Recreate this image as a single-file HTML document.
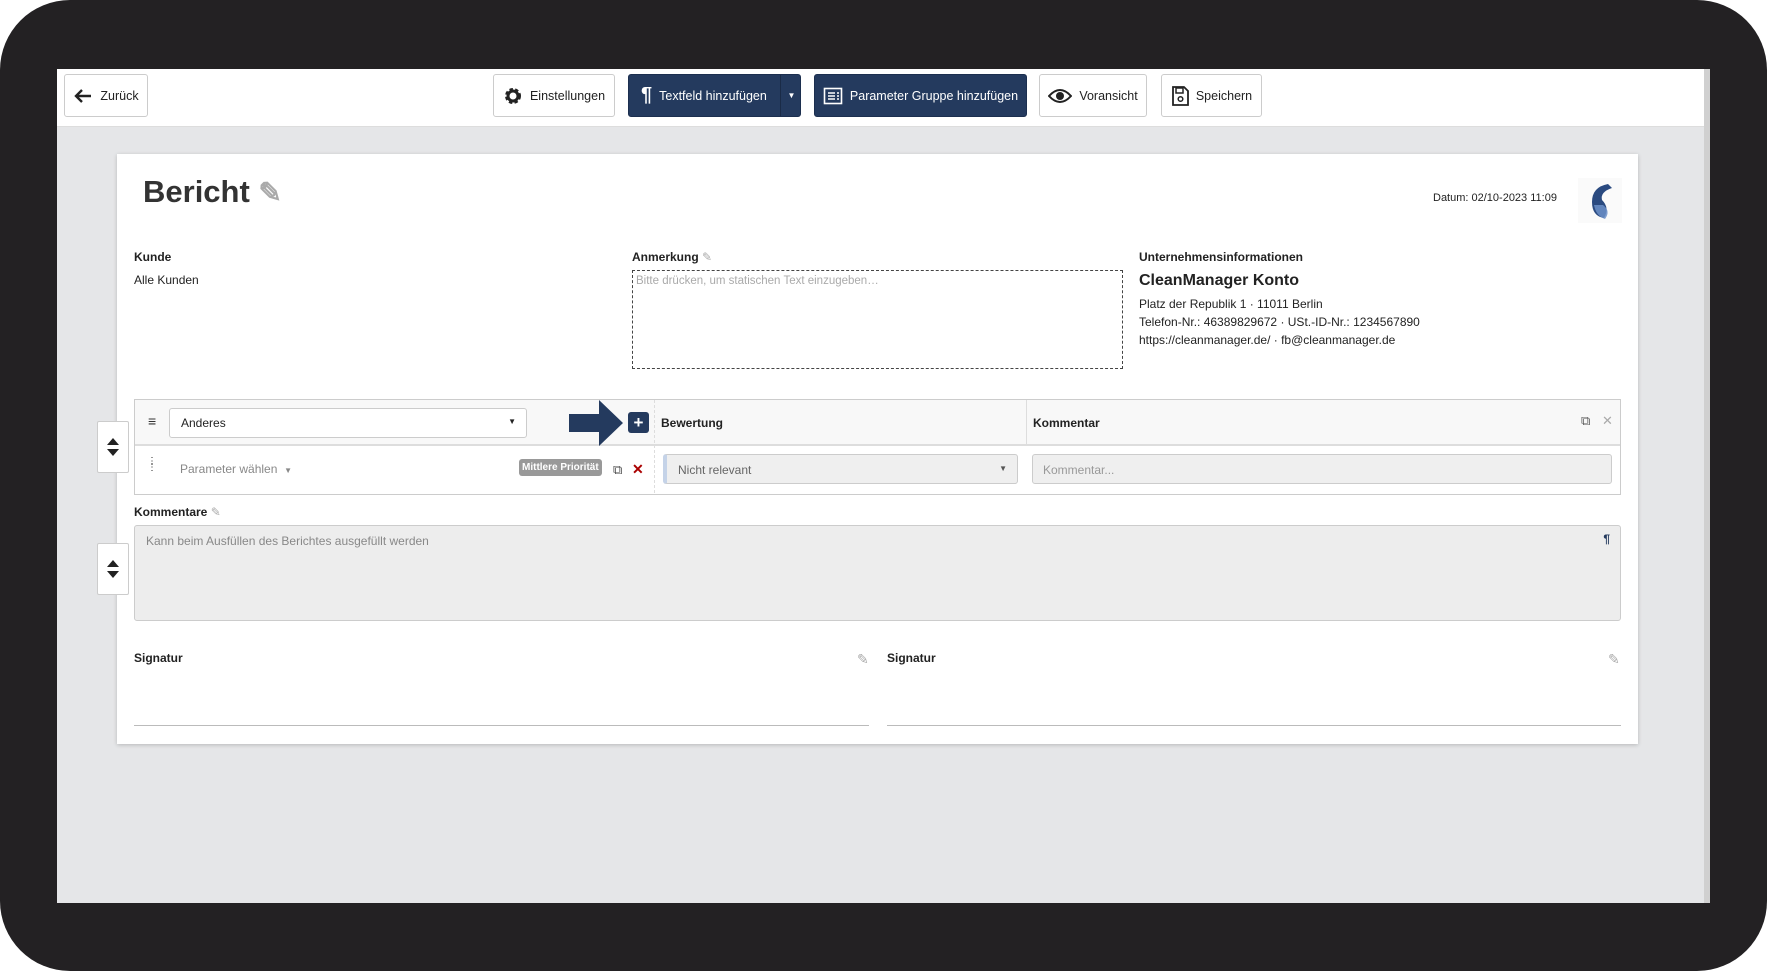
<!DOCTYPE html>
<html><head><meta charset="utf-8"><style>
*{box-sizing:border-box;margin:0;padding:0}
body{width:1767px;height:971px;background:#fff;font-family:"Liberation Sans",Arial,sans-serif;color:#333;position:relative;overflow:hidden}
.frame{position:absolute;left:0;top:0;width:1767px;height:971px;background:#232123;border-radius:70px}
.screen{position:absolute;left:57px;top:69px;width:1653px;height:834px;background:#e5e6e8;overflow:hidden}
.topbar{position:absolute;left:0;top:0;width:100%;height:58px;background:#fff;border-bottom:1px solid #ddd}
.a{position:absolute}
.btn{position:absolute;top:5px;height:43px;border:1px solid #ccc;border-radius:3px;background:#fff;font-size:12.5px;display:flex;align-items:center;justify-content:center;gap:7px;color:#222}
.btn.d{background:#243a5e;border-color:#1c2f4f;color:#fff}
.card{position:absolute;left:60px;top:85px;width:1521px;height:590px;background:#fff;box-shadow:0 1px 4px rgba(0,0,0,.2)}
.lbl{font-size:12px;font-weight:bold;color:#222}
.t{font-size:12px;color:#222}
.side{position:absolute;left:40px;width:32px;height:52px;background:#fff;border:1px solid #ccc;border-radius:2px;display:flex;align-items:center;justify-content:center}
</style></head><body>
<div class="frame"></div>
<div class="screen">
<div class="topbar">
 <div class="btn" style="left:7px;width:84px"><svg width="20" height="16" viewBox="0 0 20 16"><path d="M9 2L3 8l6 6M3 8h15" stroke="#222" stroke-width="2.4" fill="none"/></svg>Zurück</div>
 <div class="btn" style="left:436px;width:122px"><svg width="20" height="20" viewBox="0 0 20 20"><circle cx="10" cy="10" r="6" fill="none" stroke="#222" stroke-width="4" stroke-dasharray="3 2"/><circle cx="10" cy="10" r="5" fill="none" stroke="#222" stroke-width="3"/></svg>Einstellungen</div>
 <div class="btn d" style="left:571px;width:173px;justify-content:flex-start;padding-left:12px"><span style="font-size:20px;font-weight:bold">¶</span>Textfeld hinzufügen<span style="position:absolute;left:151px;top:0;height:41px;border-left:1px solid #1a2b47;width:22px;display:flex;align-items:center;justify-content:center;font-size:8px">▼</span></div>
 <div class="btn d" style="left:757px;width:213px"><svg width="20" height="18" viewBox="0 0 20 18"><rect x="1.5" y="1.5" width="17" height="15" fill="none" stroke="#fff" stroke-width="1.6"/><path d="M5 6h7M5 9h7M5 12h7M14 6h2M14 9h2M14 12h2" stroke="#fff" stroke-width="1.4"/></svg>Parameter Gruppe hinzufügen</div>
 <div class="btn" style="left:982px;width:108px"><svg width="24" height="16" viewBox="0 0 24 16"><path d="M1 8Q12 -4 23 8Q12 20 1 8Z" fill="none" stroke="#222" stroke-width="2"/><circle cx="12" cy="8" r="4" fill="#222"/></svg>Voransicht</div>
 <div class="btn" style="left:1104px;width:101px"><svg width="18" height="20" viewBox="0 0 18 20"><path d="M2 1h11l4 4v14H2z" fill="none" stroke="#222" stroke-width="1.8"/><rect x="5" y="2" width="7" height="5" fill="none" stroke="#222" stroke-width="1.5"/><circle cx="9.5" cy="13" r="2.3" fill="none" stroke="#222" stroke-width="1.5"/></svg>Speichern</div>
</div>
<div style="position:absolute;right:0;top:0;width:6px;height:100%;background:#d0d0d0"></div>
<div class="card">
 <div class="a" style="left:26px;top:20px;font-size:31px;font-weight:bold;color:#333">Bericht <span style="color:#aaa;font-size:28px">✎</span></div>
 <div class="a t" style="left:1316px;top:38px;font-size:11px">Datum: 02/10-2023 11:09</div>
 <svg class="a" style="left:1461px;top:24px" width="44" height="45" viewBox="0 0 44 45"><rect width="44" height="45" fill="#fafafa"/><path d="M30 6Q14 9 14 24Q14 38 26 40Q32 30 24 22Q22 14 34 10Z" fill="#2a4a80"/><path d="M16 27Q18 38 27 41Q33 33 25 27Z" fill="#6b8fc8" opacity=".85"/></svg>
 <div class="a lbl" style="left:17px;top:96px">Kunde</div>
 <div class="a t" style="left:17px;top:119px">Alle Kunden</div>
 <div class="a lbl" style="left:515px;top:96px">Anmerkung <span style="color:#aaa;font-weight:normal">✎</span></div>
 <div class="a" style="left:515px;top:116px;width:491px;height:99px;border:1px dashed #444;font-size:11.5px;color:#aaa;padding:4px 3px">Bitte drücken, um statischen Text einzugeben…</div>
 <div class="a lbl" style="left:1022px;top:96px">Unternehmensinformationen</div>
 <div class="a" style="left:1022px;top:118px;font-size:16px;font-weight:bold;color:#222">CleanManager Konto</div>
 <div class="a t" style="left:1022px;top:141px;line-height:18px">Platz der Republik 1 · 11011 Berlin<br>Telefon-Nr.: 46389829672 · USt.-ID-Nr.: 1234567890<br>https://cleanmanager.de/ · fb@cleanmanager.de</div>
 <div class="a" style="left:17px;top:245px;width:1487px;height:96px;border:1.5px solid #ccc;background:#fff">
  <div class="a" style="left:0;top:0;width:100%;height:46px;background:#f8f8f8;border-bottom:2px solid #ddd"></div>
  <div class="a" style="left:519px;top:0;height:93px;border-left:1px dashed #ddd"></div>
  <div class="a" style="left:891px;top:0;height:46px;border-left:1px solid #ddd"></div>
  <div class="a" style="left:13px;top:13px;font-size:14px">≡</div>
  <div class="a t" style="left:34px;top:8px;width:358px;height:30px;border:1px solid #ccc;border-radius:3px;background:#fff;padding:7px 11px">Anderes<span style="position:absolute;right:10px;top:8px;font-size:8px">▼</span></div>
  <svg class="a" style="left:434px;top:0" width="56" height="46" viewBox="0 0 56 46"><path d="M0 14h30V0l24 23-24 23V32H0z" fill="#243a5e"/></svg>
  <div class="a" style="left:493px;top:12px;width:21px;height:21px;background:#243a5e;border-radius:3px;color:#fff;font-weight:bold;font-size:17px;text-align:center;line-height:21px">+</div>
  <div class="a lbl" style="left:526px;top:16px">Bewertung</div>
  <div class="a lbl" style="left:898px;top:16px">Kommentar</div>
  <div class="a" style="left:1446px;top:13px;font-size:13px;color:#555">⧉</div>
  <div class="a" style="left:1467px;top:13px;font-size:13px;color:#aaa">✕</div>
  <div class="a" style="left:12px;top:59px;font-size:10px;color:#333;line-height:6px">⋮<br>⋮</div>
  <div class="a" style="left:45px;top:62px;font-size:12px;color:#888">Parameter wählen &nbsp;<span style="font-size:8px">▼</span></div>
  <div class="a" style="left:384px;top:59px;background:#999;color:#fff;font-size:10px;font-weight:bold;padding:3px 3px;border-radius:3px">Mittlere Priorität</div>
  <div class="a" style="left:478px;top:62px;font-size:13px;color:#444">⧉</div>
  <div class="a" style="left:497px;top:61px;font-size:14px;color:#a00;font-weight:bold">✕</div>
  <div class="a" style="left:528px;top:54px;width:355px;height:30px;background:#efefef;border:1px solid #ccc;border-left:4px solid #c5d3e8;border-radius:3px;font-size:12px;color:#666;padding:8px 11px">Nicht relevant<span style="position:absolute;right:10px;top:9px;font-size:8px;color:#555">▼</span></div>
  <div class="a" style="left:897px;top:54px;width:580px;height:30px;background:#efefef;border:1px solid #ccc;border-radius:3px;font-size:12px;color:#999;padding:8px 10px">Kommentar...</div>
 </div>
 <div class="a lbl" style="left:17px;top:351px">Kommentare <span style="color:#aaa;font-weight:normal">✎</span></div>
 <div class="a" style="left:17px;top:371px;width:1487px;height:96px;background:#ededed;border:1px solid #ccc;border-radius:3px;font-size:12px;color:#888;padding:8px 11px">Kann beim Ausfüllen des Berichtes ausgefüllt werden<span style="position:absolute;right:10px;top:6px;color:#243a5e;font-weight:bold">¶</span></div>
 <div class="a lbl" style="left:17px;top:497px">Signatur</div>
 <div class="a" style="left:740px;top:497px;color:#aaa;font-size:14px">✎</div>
 <div class="a" style="left:17px;top:571px;width:735px;border-top:1px solid #bbb"></div>
 <div class="a lbl" style="left:770px;top:497px">Signatur</div>
 <div class="a" style="left:1491px;top:497px;color:#aaa;font-size:14px">✎</div>
 <div class="a" style="left:770px;top:571px;width:734px;border-top:1px solid #bbb"></div>
</div>
<div class="side" style="top:352px"><svg width="14" height="20" viewBox="0 0 14 20"><path d="M1 8L7 1l6 7zM1 12l6 7 6-7z" fill="#222"/></svg></div>
<div class="side" style="top:474px"><svg width="14" height="20" viewBox="0 0 14 20"><path d="M1 8L7 1l6 7zM1 12l6 7 6-7z" fill="#222"/></svg></div>
</div>
</body></html>
